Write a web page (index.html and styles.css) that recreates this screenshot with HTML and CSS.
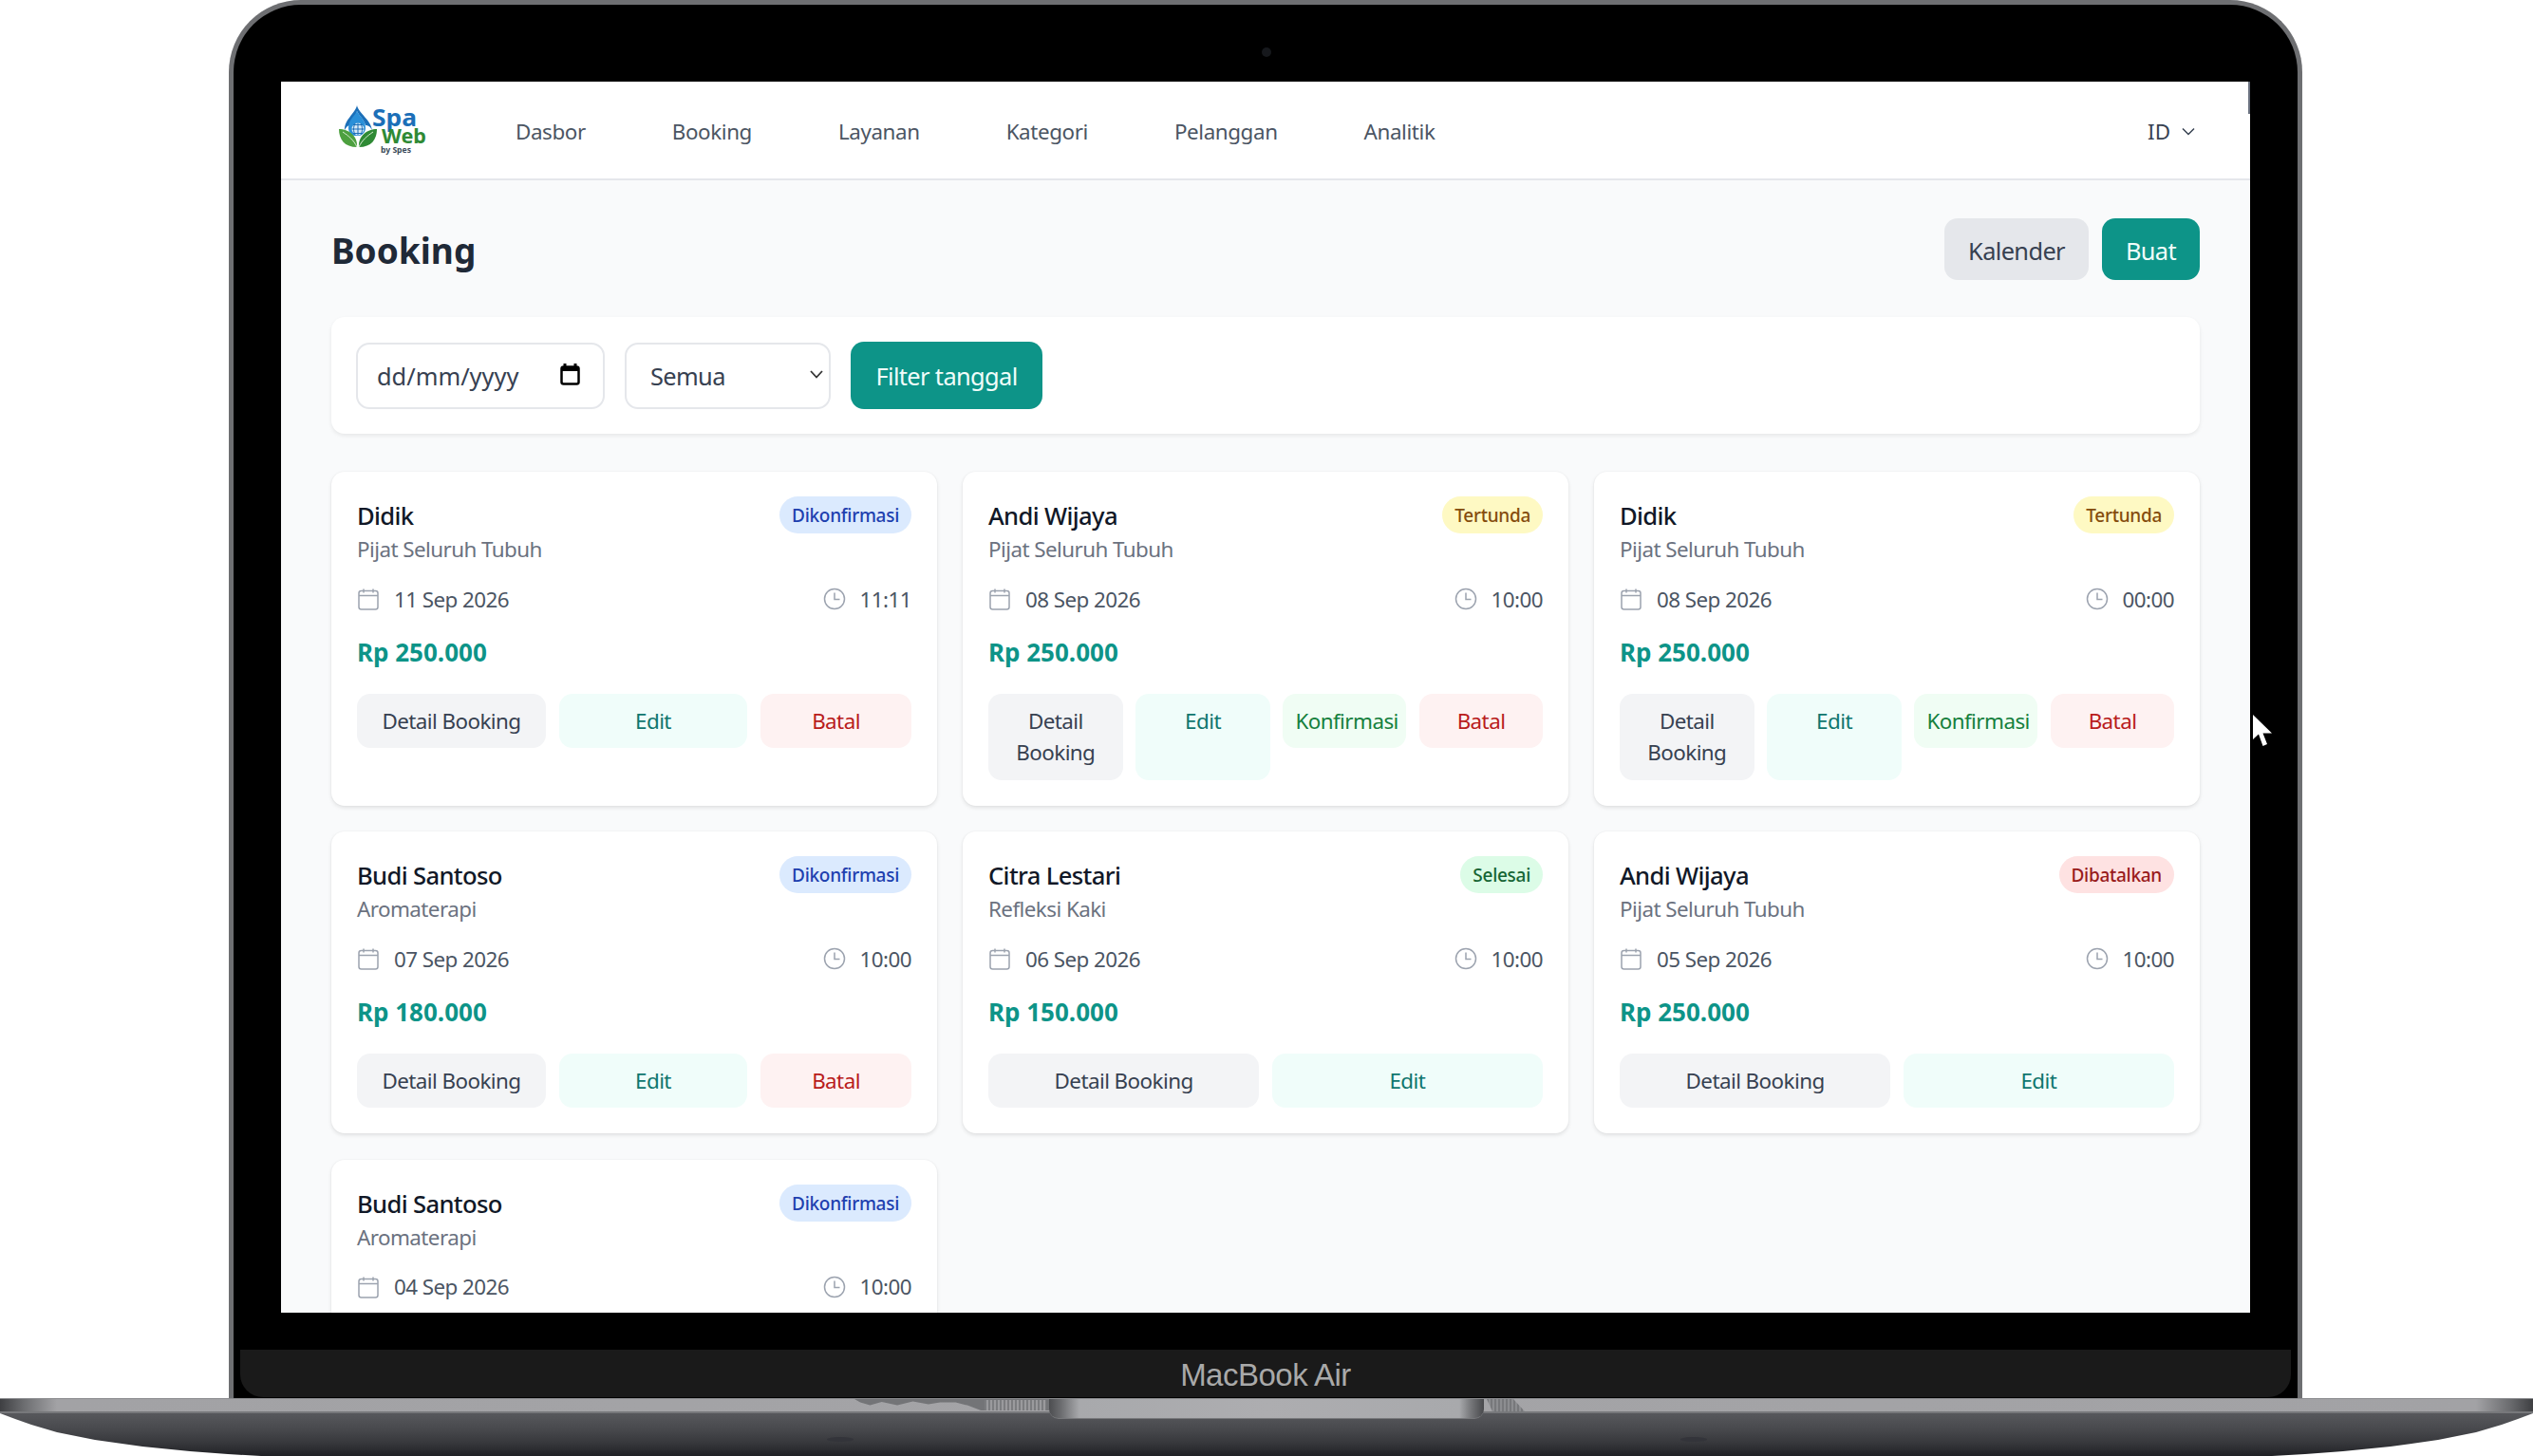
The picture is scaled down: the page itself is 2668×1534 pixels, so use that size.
FILE: index.html
```html
<!DOCTYPE html>
<html lang="id">
<head>
<meta charset="utf-8">
<title>Booking</title>
<link rel="stylesheet" href="styles.css">
</head>
<body>
<svg class="defs" width="0" height="0" aria-hidden="true">
  <symbol id="i-cal" viewBox="0 0 24 24"><path d="M7 1.500v4M17 1.500v4M2 8.500h20M4.500 3.500h15A2.500 2.500 0 0 1 22 6v14.500a2.500 2.500 0 0 1-2.500 2.500h-15A2.500 2.500 0 0 1 2 20.500V6a2.500 2.500 0 0 1 2.500-2.500z" fill="none" stroke="currentColor" stroke-width="1.500"/></symbol>
  <symbol id="i-clock" viewBox="0 0 24 24"><circle cx="12" cy="12" r="10.500" fill="none" stroke="currentColor" stroke-width="1.500"/><path d="M12 5.500V12.500H17.500" fill="none" stroke="currentColor" stroke-width="1.500"/></symbol>
</svg>
<div class="device">
  <div class="lid">
    <span class="camera"></span>
    <div class="screen">
      <span class="scroll-mark"></span>
      <header class="topbar">
        <svg class="logo" viewBox="0 -8 94 60" role="img" aria-label="SpaWeb by Spes">
          <path d="M19 0C21 9 34 15 35 27C34 23 31 21 28 21C26 14 21 11 19 6C18 12 13 15 11 21C8 22 6 25 6 27C5 15 17 9 19 0Z" fill="#1c6fb8"/>
          <path d="M19 6C21 11 28 15 28 24C28 28 25 31 22 32L16 32C13 31 10 28 10 24C10 15 17 11 19 6Z" fill="#2a8fd8"/>
          <circle cx="20" cy="25" r="6.500" fill="#d6e8f6"/>
          <path d="M13.500 25H26.500M20 18.500V31.500M15 20.500H25M15 29.500H25M17 19C15 23 15 27 17 31M23 19C25 23 25 27 23 31" fill="none" stroke="#1c6fb8" stroke-width="1"/>
          <path d="M19 44C6 44 0 36 0 25C10 25 20 32 19 44Z" fill="#4da03f"/>
          <path d="M21 44C34 44 40 36 40 25C30 25 20 32 21 44Z" fill="#2f8a35"/>
          <path d="M4 28C10 32 16 37 19 44M36 28C30 32 24 37 21 44" fill="none" stroke="#d8edd2" stroke-width="1"/>
          <text class="logo-spa" x="35" y="22" textLength="47" lengthAdjust="spacingAndGlyphs">Spa</text>
          <text class="logo-web" x="45" y="40" textLength="47" lengthAdjust="spacingAndGlyphs">Web</text>
          <text class="logo-by" x="44" y="50" textLength="32" lengthAdjust="spacingAndGlyphs">by Spes</text>
        </svg>
        <nav class="nav">
          <a class="nav-link">Dasbor</a>
          <a class="nav-link">Booking</a>
          <a class="nav-link">Layanan</a>
          <a class="nav-link">Kategori</a>
          <a class="nav-link">Pelanggan</a>
          <a class="nav-link">Analitik</a>
        </nav>
        <div class="lang">ID
          <svg class="lang-chev" viewBox="0 0 14 9"><path d="M1 1.500L7 7.500L13 1.500" fill="none" stroke="currentColor" stroke-width="1.500"/></svg>
        </div>
      </header>
      <main class="content">
        <div class="page-head">
          <h1 class="title">Booking</h1>
          <div class="head-actions">
            <a class="head-btn head-btn-gray">Kalender</a>
            <a class="head-btn head-btn-teal">Buat</a>
          </div>
        </div>
        <div class="filter">
          <div class="field field-date">dd/mm/yyyy
            <svg class="date-icon" viewBox="0 0 21 23"><path d="M5 0v4M16 0v4" stroke="#000" stroke-width="3"/><rect x="1.500" y="3.500" width="18" height="18" rx="2" fill="none" stroke="#000" stroke-width="2.500"/><rect x="1.500" y="3.500" width="18" height="4.500" fill="#000"/></svg>
          </div>
          <div class="field field-select">Semua
            <svg class="select-chev" viewBox="0 0 14 9"><path d="M1 1L7 7.500L13 1" fill="none" stroke="#333" stroke-width="1.800"/></svg>
          </div>
          <button class="filter-btn">Filter tanggal</button>
        </div>
        <div class="grid">
          <article class="card">
            <div class="card-top"><div><h2 class="name">Didik</h2><p class="service">Pijat Seluruh Tubuh</p></div><span class="badge badge-blue">Dikonfirmasi</span></div>
            <div class="meta"><span class="meta-item"><svg class="ico"><use href="#i-cal"/></svg>11 Sep 2026</span><span class="meta-item"><svg class="ico"><use href="#i-clock"/></svg>11:11</span></div>
            <div class="price">Rp 250.000</div>
            <div class="actions actions-3"><a class="act act-gray">Detail Booking</a><a class="act act-edit">Edit</a><form class="act-form"><a class="act act-red">Batal</a></form></div>
          </article>
          <article class="card">
            <div class="card-top"><div><h2 class="name">Andi Wijaya</h2><p class="service">Pijat Seluruh Tubuh</p></div><span class="badge badge-yellow">Tertunda</span></div>
            <div class="meta"><span class="meta-item"><svg class="ico"><use href="#i-cal"/></svg>08 Sep 2026</span><span class="meta-item"><svg class="ico"><use href="#i-clock"/></svg>10:00</span></div>
            <div class="price">Rp 250.000</div>
            <div class="actions actions-4"><a class="act act-gray">Detail Booking</a><a class="act act-edit">Edit</a><form class="act-form"><a class="act act-green">Konfirmasi</a></form><form class="act-form"><a class="act act-red">Batal</a></form></div>
          </article>
          <article class="card">
            <div class="card-top"><div><h2 class="name">Didik</h2><p class="service">Pijat Seluruh Tubuh</p></div><span class="badge badge-yellow">Tertunda</span></div>
            <div class="meta"><span class="meta-item"><svg class="ico"><use href="#i-cal"/></svg>08 Sep 2026</span><span class="meta-item"><svg class="ico"><use href="#i-clock"/></svg>00:00</span></div>
            <div class="price">Rp 250.000</div>
            <div class="actions actions-4"><a class="act act-gray">Detail Booking</a><a class="act act-edit">Edit</a><form class="act-form"><a class="act act-green">Konfirmasi</a></form><form class="act-form"><a class="act act-red">Batal</a></form></div>
          </article>
          <article class="card">
            <div class="card-top"><div><h2 class="name">Budi Santoso</h2><p class="service">Aromaterapi</p></div><span class="badge badge-blue">Dikonfirmasi</span></div>
            <div class="meta"><span class="meta-item"><svg class="ico"><use href="#i-cal"/></svg>07 Sep 2026</span><span class="meta-item"><svg class="ico"><use href="#i-clock"/></svg>10:00</span></div>
            <div class="price">Rp 180.000</div>
            <div class="actions actions-3"><a class="act act-gray">Detail Booking</a><a class="act act-edit">Edit</a><form class="act-form"><a class="act act-red">Batal</a></form></div>
          </article>
          <article class="card">
            <div class="card-top"><div><h2 class="name">Citra Lestari</h2><p class="service">Refleksi Kaki</p></div><span class="badge badge-green">Selesai</span></div>
            <div class="meta"><span class="meta-item"><svg class="ico"><use href="#i-cal"/></svg>06 Sep 2026</span><span class="meta-item"><svg class="ico"><use href="#i-clock"/></svg>10:00</span></div>
            <div class="price">Rp 150.000</div>
            <div class="actions"><a class="act act-gray">Detail Booking</a><a class="act act-edit">Edit</a></div>
          </article>
          <article class="card">
            <div class="card-top"><div><h2 class="name">Andi Wijaya</h2><p class="service">Pijat Seluruh Tubuh</p></div><span class="badge badge-red">Dibatalkan</span></div>
            <div class="meta"><span class="meta-item"><svg class="ico"><use href="#i-cal"/></svg>05 Sep 2026</span><span class="meta-item"><svg class="ico"><use href="#i-clock"/></svg>10:00</span></div>
            <div class="price">Rp 250.000</div>
            <div class="actions"><a class="act act-gray">Detail Booking</a><a class="act act-edit">Edit</a></div>
          </article>
          <article class="card">
            <div class="card-top"><div><h2 class="name">Budi Santoso</h2><p class="service">Aromaterapi</p></div><span class="badge badge-blue">Dikonfirmasi</span></div>
            <div class="meta"><span class="meta-item"><svg class="ico"><use href="#i-cal"/></svg>04 Sep 2026</span><span class="meta-item"><svg class="ico"><use href="#i-clock"/></svg>10:00</span></div>
          </article>
        </div>
      </main>
    </div>
    <div class="chin">MacBook Air</div>
  </div>
  <div class="base">
    <div class="base-strip"><span class="noise-left"></span><span class="noise-dots"></span><span class="noise-right"></span></div>
    <div class="notch"></div>
    <span class="foot foot-left"></span>
    <span class="foot foot-right"></span>
  </div>
</div>
<svg class="cursor" viewBox="0 0 20 33" aria-hidden="true"><path d="M0 0V26L6 20.500L10.500 33L15 31L10.500 19.500H20Z" fill="#fff"/></svg>
</body>
</html>
```

FILE: styles.css
```css
* { box-sizing: border-box; }
html, body { margin: 0; padding: 0; }
body {
  width: 2668px;
  height: 1534px;
  overflow: hidden;
  background: #fff;
  font-family: "Noto Sans", "Open Sans", sans-serif;
  position: relative;
}
.defs { position: absolute; }
h1, h2, p { margin: 0; }

/* device */
.device { width: 2668px; height: 1534px; display: flex; flex-direction: column; align-items: center; }
.lid {
  width: 2184px;
  height: 1473px;
  flex: none;
  margin-right: 2px;
  background: #000;
  border: 5px solid #6e6f72;
  border-bottom: 0;
  border-radius: 76px 76px 0 0;
  display: flex;
  flex-direction: column;
  position: relative;
}
.camera {
  position: absolute;
  left: 1083px;
  top: 45px;
  width: 10px;
  height: 10px;
  border-radius: 50%;
  background: #16181c;
}
.screen {
  margin: 81px 50px 39px;
  height: 1297px;
  flex: none;
  background: #f9fafb;
  overflow: hidden;
  position: relative;
}
.scroll-mark { position: absolute; right: 0; top: 0; width: 2px; height: 34px; background: #6b7280; }
.chin {
  flex: 1;
  margin: 0 7px 1px;
  padding-top: 3px;
  background: #1a1a1a;
  border-radius: 0 0 24px 24px;
  color: #a9a9a9;
  font-family: "Liberation Sans", sans-serif;
  font-size: 33px;
  letter-spacing: -0.5px;
  display: flex;
  align-items: center;
  justify-content: center;
}
.base {
  width: 2668px;
  height: 61px;
  flex: none;
  position: relative;
  background: linear-gradient(#5a5b5f 0, #55565a 30%, #47484c 55%, #36373b 78%, #202125 100%);
  clip-path: polygon(0 0, 100% 0, 100% 16px, calc(100% - 16px) 22px, calc(100% - 33px) 28px, calc(100% - 60px) 36px, calc(100% - 100px) 44px, calc(100% - 150px) 51px, calc(100% - 200px) 56px, calc(100% - 240px) 59px, calc(100% - 275px) 61px, 275px 61px, 240px 59px, 200px 56px, 150px 51px, 100px 44px, 60px 36px, 33px 28px, 16px 22px, 0 16px);
}
.base-strip {
  height: 16px;
  background: linear-gradient(90deg, #3e3f42 0, #6c6d70 25px, #a2a2a5 60px, #a4a4a7 50%, #a2a2a5 calc(100% - 60px), #6c6d70 calc(100% - 25px), #3e3f42 100%);
  border-top: 1px solid #8b8c8f;
  border-bottom: 2px solid #77787b;
  position: relative;
}
.noise-left {
  position: absolute;
  left: 900px;
  top: 0;
  width: 205px;
  height: 12px;
  background: #737477;
  clip-path: polygon(0 0, 100% 0, 100% 100%, 65% 100%, 58% 55%, 52% 30%, 44% 30%, 38% 45%, 30% 20%, 22% 55%, 14% 25%, 8% 55%, 3% 30%);
}
.noise-dots {
  position: absolute;
  left: 1037px;
  top: 1px;
  width: 65px;
  height: 11px;
  background: repeating-linear-gradient(90deg, #7b7c7f 0 2px, #9a9a9d 2px 4px);
}
.noise-right {
  position: absolute;
  left: 1566px;
  top: 0;
  width: 40px;
  height: 13px;
  background: repeating-linear-gradient(90deg, #77787b 0 2px, #8c8d90 2px 4px);
  clip-path: polygon(0 0, 70% 0, 100% 100%, 15% 100%);
}
.notch {
  position: absolute;
  left: 1105px;
  top: 1px;
  width: 458px;
  height: 21px;
  background: linear-gradient(90deg, #4c4d50, #6a6b6e 12px, #a8a9ac 32px, #adadb0 50%, #a8a9ac calc(100% - 26px), #77787b calc(100% - 14px), #47484b);
  border-bottom: 1px solid #77787b;
  border-radius: 0 0 10px 10px;
}
.foot { position: absolute; top: 41px; width: 28px; height: 5px; border-radius: 50%; background: #33343a; }
.foot-left { left: 871px; }
.foot-right { left: 1770px; }
.cursor { position: absolute; left: 2373px; top: 753px; width: 20px; height: 33px; }

/* header */
.topbar {
  height: 104px;
  background: #fff;
  border-bottom: 2px solid #e5e7eb;
  display: flex;
  align-items: center;
  padding: 2px 58px 0 61px;
}
.logo { width: 94px; height: 60px; flex: none; margin-top: -11px; }
.logo-spa { font: 700 25px "Noto Sans", sans-serif; fill: #1c6fb8; }
.logo-web { font: 700 22px "Noto Sans", sans-serif; fill: #2f8a35; }
.logo-by { font: 700 8px "Noto Sans", sans-serif; fill: #3b4a5a; }
.nav { display: flex; gap: 91px; margin-left: 92px; flex: 1; }
.nav-link { font-size: 22.4px; letter-spacing: -.018em; color: #4b5563; }
.lang { display: flex; align-items: center; gap: 12px; font-size: 22.4px; color: #374151; }
.lang-chev { width: 14px; height: 9px; }

/* content */
.content { padding: 40px 53px; }
.page-head { display: flex; justify-content: space-between; align-items: center; height: 65px; }
.title { font-size: 37px; font-weight: 700; color: #1f2937; line-height: 1.2; padding-top: 3px; }
.head-actions { display: flex; gap: 14px; }
.head-btn { height: 65px; display: flex; align-items: center; padding: 2px 25px 0; border-radius: 14px; font-size: 25.4px; letter-spacing: -.025em; }
.head-btn-gray { background: #e5e7eb; color: #374151; }
.head-btn-teal { background: #0d9488; color: #f0fdfa; }

.filter {
  margin-top: 39px;
  height: 123px;
  background: #fff;
  border-radius: 14px;
  box-shadow: 0 2px 4px rgba(0,0,0,.08);
  display: flex;
  align-items: center;
  gap: 21px;
  padding: 0 26px;
}
.field {
  height: 70px;
  background: #fff;
  border: 2px solid #e5e7eb;
  border-radius: 14px;
  display: flex;
  align-items: center;
  justify-content: space-between;
  font-size: 25.4px;
  color: #374151;
  padding-top: 1px;
}
.field-date { width: 262px; padding-left: 20px; padding-right: 24px; }
.field-select { width: 217px; padding-left: 25px; padding-right: 4px; letter-spacing: -.025em; }
.date-icon { width: 21px; height: 23px; margin-top: -4px; }
.select-chev { width: 14px; height: 9px; margin-right: 2px; margin-top: -4px; }
.filter-btn {
  height: 71px;
  width: 202px;
  border: 0;
  border-radius: 14px;
  background: #0d9488;
  color: #f0fdfa;
  font: inherit;
  font-size: 25.4px;
  letter-spacing: -.025em;
  padding: 0;
}

/* cards */
.grid { margin-top: 40px; display: grid; grid-template-columns: repeat(3, 1fr); column-gap: 27px; row-gap: 27.500px; }
.card {
  background: #fff;
  border-radius: 14px;
  box-shadow: 0 2px 4px rgba(0,0,0,.1), 0 0 2px rgba(0,0,0,.05);
  padding: 26px 27px 27px;
}
.card-top { display: flex; justify-content: space-between; align-items: flex-start; }
.name { font-size: 25.600px; font-weight: 500; letter-spacing: -.025em; color: #111827; line-height: 41px; }
.service { font-size: 22.4px; letter-spacing: -.025em; color: #6b7280; line-height: 30px; }
.badge { height: 39px; padding: 1px 13px 0; border-radius: 20px; font-size: 19px; font-weight: 500; letter-spacing: -.015em; display: flex; align-items: center; }
.badge-blue { background: #dbeafe; color: #1e40af; }
.badge-yellow { background: #fef9c3; color: #854d0e; }
.badge-green { background: #dcfce7; color: #166534; }
.badge-red { background: #fee2e2; color: #991b1b; }
.meta { margin-top: 20px; display: flex; justify-content: space-between; align-items: center; height: 34px; font-size: 22.4px; letter-spacing: -.025em; color: #4b5563; }
.meta-item { display: flex; align-items: center; gap: 15px; }
.ico { width: 24px; height: 24px; color: #9ca3af; }
.price { margin-top: 18.500px; font-size: 26px; font-weight: 700; color: #0d9488; line-height: 41px; }
.actions { margin-top: 23.500px; display: flex; gap: 13.600px; align-items: stretch; }
.act {
  flex: 1 1 0;
  display: block;
  min-width: 0;
  padding: 12px 13px;
  border-radius: 14px;
  font-size: 22.4px;
  letter-spacing: -.025em;
  line-height: 33.300px;
  text-align: center;
}
.act-form { margin: 0; flex: none; }
.actions-3 .act-form { width: 159px; }
.actions-4 .act-form { width: 130px; }
.act-gray { background: #f3f4f6; color: #374151; }
.act-edit { background: #f0fdfa; color: #0f766e; }
.act-green { background: #f0fdf4; color: #15803d; }
.act-red { background: #fef2f2; color: #b91c1c; }
```
